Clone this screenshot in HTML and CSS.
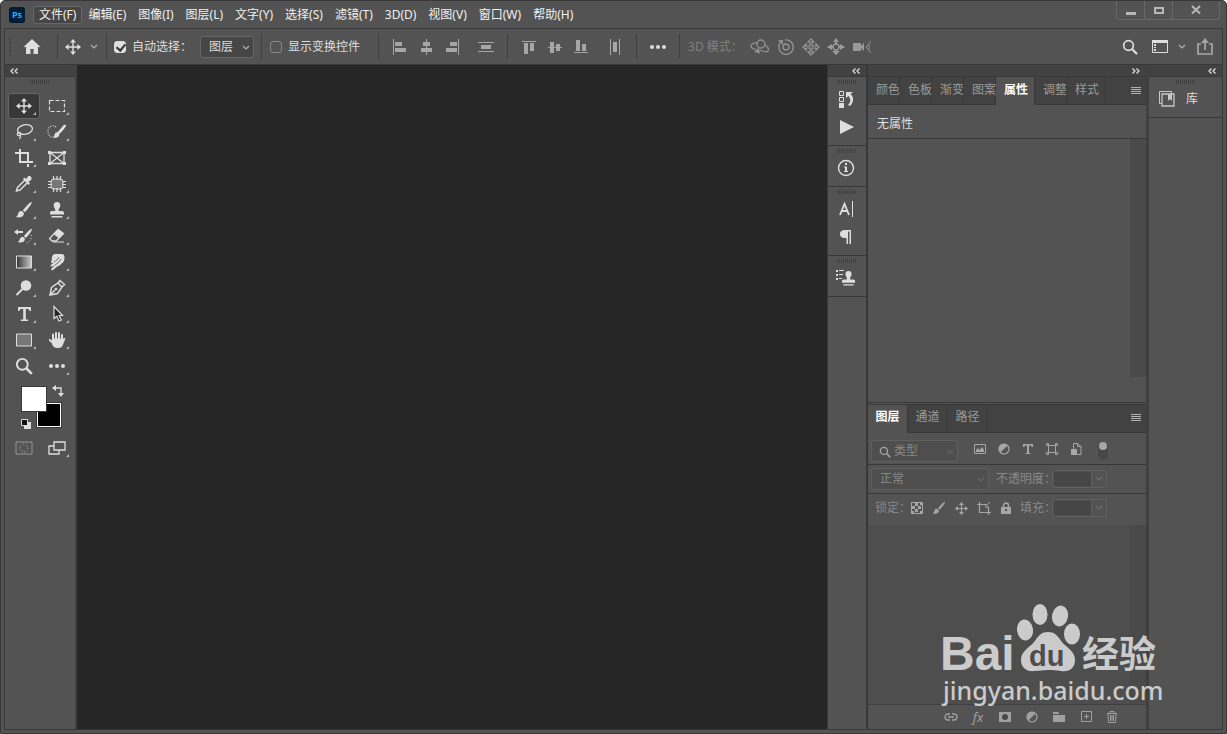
FILE: index.html
```html
<!DOCTYPE html>
<html lang="zh-CN">
  <head>
    <meta charset="UTF-8" />
    <meta name="viewport" content="width=device-width, initial-scale=1.0" />
    <title>Photoshop</title>
    <link rel="stylesheet" href="styles.css">
  </head>
  <body>
    <!-- Shared shapes -->
    <svg class="sprite" width="0" height="0" aria-hidden="true">
      <symbol id="move" viewBox="0 0 16 16"><path d="M8 2v12M2 8h12" stroke="currentColor" stroke-width="1.4"/><path d="M8 0l3 3.6H5zM8 16l3-3.6H5zM0 8l3.6-3v6zM16 8l-3.6-3v6z" fill="currentColor"/></symbol>
      <symbol id="chevron" viewBox="0 0 8 6"><path d="M1 1l3 3 3-3" fill="none" stroke="currentColor" stroke-width="1.2"/></symbol>
      <symbol id="collapse" viewBox="0 0 8 6"><path d="M3.5.5L1 3l2.500 2.500M7.500.5L5 3l2.500 2.500" fill="none" stroke="currentColor" stroke-width="1.300"/></symbol>
      <symbol id="menu" viewBox="0 0 10 8"><path d="M0 .5h10M0 2.500h10M0 4.500h10M0 6.500h10" stroke="currentColor"/></symbol>
      <symbol id="brush" viewBox="0 0 18 18"><path d="M16.500 1c-1-.5-5.500 4.300-8.700 8.300l2 1.900C13.500 7.500 17.600 2 16.500 1z" fill="currentColor"/><path d="M7 10.200c-1.800-.6-3.200.3-3.700 2-.4 1.700-1.200 2.900-2.300 3.800 2.800.8 7 .6 7.800-2.700.3-1.300-.4-2.500-1.800-3.100z" fill="currentColor"/></symbol>
      <symbol id="stamp" viewBox="0 0 16 18"><path d="M8 1a3.400 3.400 0 0 0-3.300 3.500C4.700 6.800 6.500 7 6.300 10H3c-1.200 0-2 .8-2 2v1.500h14V12c0-1.200-.8-2-2-2H9.700c-.2-3 1.600-3.200 1.600-5.500A3.400 3.400 0 0 0 8 1zM2.500 15h11v1.500h-11z" fill="currentColor"/></symbol>
      <symbol id="half" viewBox="0 0 12 12"><circle cx="6" cy="6" r="5" fill="none" stroke="currentColor" stroke-width="1.200"/><path d="M9.600 2.400A5.100 5.100 0 1 1 2.400 9.600z" fill="currentColor" transform="rotate(180 6 6)"/></symbol>
      <symbol id="search" viewBox="0 0 16 16"><circle cx="6.500" cy="6.500" r="4.800" fill="none" stroke="currentColor" stroke-width="1.700"/><path d="M10 10l5 5" stroke="currentColor" stroke-width="2.200"/></symbol>
    </svg>

    <div class="app">
      <header class="titlebar">
        <span class="ps-logo">Ps</span>
        <nav class="menubar">
          <button class="open">文件(F)</button>
          <button>编辑(E)</button>
          <button>图像(I)</button>
          <button>图层(L)</button>
          <button>文字(Y)</button>
          <button>选择(S)</button>
          <button>滤镜(T)</button>
          <button>3D(D)</button>
          <button>视图(V)</button>
          <button>窗口(W)</button>
          <button>帮助(H)</button>
        </nav>
        <div class="window-controls">
          <button aria-label="最小化"><svg width="12" height="12"><path d="M1 8h10v3H1z" fill="#b8b8b8"/></svg></button>
          <button aria-label="最大化"><svg width="12" height="12"><path d="M2 4h8v5H2z" fill="none" stroke="#b8b8b8" stroke-width="2"/></svg></button>
          <button class="close" aria-label="关闭"><svg width="12" height="12"><path d="M2 2l8 7.500M10 2L2 9.500" stroke="#b8b8b8" stroke-width="2"/></svg></button>
        </div>
      </header>

      <div class="workspace">
        <div class="options">
          <span class="options-grip"></span>
          <div class="option-group home">
            <button aria-label="主页"><svg width="18" height="18" viewBox="0 0 18 18"><path d="M9 1l8.500 8H15v7h-4.500v-5h-3v5H3V9H.5z" fill="#dedede"/></svg></button>
          </div>
          <div class="option-group current-tool">
            <button aria-label="移动工具"><svg width="16" height="16"><use href="#move"/></svg></button>
            <button class="more" aria-label="工具预设"><svg width="8" height="6"><use href="#chevron"/></svg></button>
          </div>
          <div class="option-group auto-select">
            <label class="check"><input type="checkbox" checked />自动选择：</label>
            <div class="dropdown target">
              <select aria-label="自动选择目标"><option>图层</option><option>组</option></select>
              <svg width="8" height="6"><use href="#chevron"/></svg>
            </div>
          </div>
          <div class="option-group transform">
            <label class="check"><input type="checkbox" />显示变换控件</label>
          </div>
          <div class="option-group align">
            <button aria-label="左对齐"><svg width="16" height="16"><path d="M1 0h1v16H1zM3 3h7v4H3zM3 9h11v4H3z"/></svg></button>
            <button aria-label="水平居中对齐"><svg width="16" height="16"><path d="M8 0h1v16H8zM5 3h7v4H5zM3 9h11v4H3z"/></svg></button>
            <button aria-label="右对齐"><svg width="16" height="16"><path d="M14 0h1v16h-1zM6 3h7v4H6zM2 9h11v4H2z"/></svg></button>
            <button class="spaced" aria-label="垂直分布"><svg width="16" height="16"><path d="M0 3h16v1H0zM3 6h10v4H3zM0 12h16v1H0z"/></svg></button>
          </div>
          <div class="option-group align">
            <button aria-label="顶对齐"><svg width="16" height="16"><path d="M1 2h14v1H1zM3 4h4v11H3zM9 4h4v8H9z"/></svg></button>
            <button aria-label="垂直居中对齐"><svg width="16" height="16"><path d="M1 8h14v1H1zM3 3h4v11H3zM9 5h4v7H9z"/></svg></button>
            <button aria-label="底对齐"><svg width="16" height="16"><path d="M1 13h14v1H1zM3 1h4v11H3zM9 5h4v7H9z"/></svg></button>
            <button class="spaced" aria-label="水平分布"><svg width="16" height="16"><path d="M3 0h1v16H3zM6 3h4v10H6zM12 0h1v16h-1z"/></svg></button>
          </div>
          <div class="option-group more-align">
            <button aria-label="更多"><svg width="18" height="6"><g fill="#dedede"><circle cx="3" cy="3" r="2"/><circle cx="9" cy="3" r="2"/><circle cx="15" cy="3" r="2"/></g></svg></button>
          </div>
          <div class="option-group mode-3d">
            <span>3D 模式：</span>
            <button aria-label="环绕"><svg width="20" height="18" viewBox="0 0 20 18"><g fill="none" stroke="#919191" stroke-width="1.300"><circle cx="11" cy="6" r="4"/><path d="M8 5c-4-.5-7 1-7 3 0 1.500 2 3 5 3.500M15 7c2.500 1.500 4 4 3 6-1.500 2-5 .5-8-1"/></g><path d="M4 14l5-4.500 1 6z" fill="#919191"/></svg></button>
            <button aria-label="滚动"><svg width="18" height="18"><g fill="none" stroke="#919191" stroke-width="1.400"><circle cx="9" cy="9" r="3"/><path d="M4 4a7.200 7.200 0 1 0 4-2"/></g><path d="M1 2h5v5z" fill="#919191"/></svg></button>
            <button aria-label="平移"><svg width="18" height="18"><path d="M9 1l3 3h-2v4h4V6l3 3-3 3v-2h-4v4h2l-3 3-3-3h2v-4H4v2L1 9l3-3v2h4V4H6z" fill="none" stroke="#999" stroke-width="1.200"/></svg></button>
            <button aria-label="滑动"><svg width="18" height="18"><path d="M9 1.500v15M1 9h16" stroke="#999" stroke-width="2"/><path d="M9 0l3 4H6zM5 13h8l-4 4zM0 9l5-3v6zM18 9l-5-3v6z" fill="#999"/><circle cx="9" cy="9" r="3" fill="#535353" stroke="#999" stroke-width="1.300"/></svg></button>
            <button aria-label="缩放相机"><svg width="20" height="14" viewBox="0 0 20 14"><path d="M1 3h8v8H1zM9 6l3-3v8L9 8z" fill="#999"/><path d="M19 1l-5 6 5 6M17 4v6" fill="none" stroke="#919191"/></svg></button>
          </div>
          <div class="options-right">
            <button class="find" aria-label="搜索"><svg width="16" height="16"><use href="#search"/></svg></button>
            <button aria-label="工作区"><svg width="16" height="14"><path d="M.5.5h15v12H.5z" fill="none" stroke="#dedede"/><path d="M0 0h16v3H0zM2 4h2v2H2zM2 7h2v1H2zM2 9h2v2H2z" fill="#dedede"/></svg></button>
            <button class="more" aria-label="工作区选项"><svg width="8" height="6"><use href="#chevron"/></svg></button>
            <button aria-label="共享"><svg width="18" height="18"><path d="M5 6H2v10h14V6h-3M9 12V3" fill="none" stroke="#a6a6a6" stroke-width="1.700"/><path d="M9 0l4 5H5z" fill="#a6a6a6"/></svg></button>
          </div>
        </div>

        <main class="main">
          <aside class="toolbar">
            <div class="strip"><button aria-label="折叠"><svg width="8" height="6"><use href="#collapse"/></svg></button></div>
            <div class="grip"></div>
            <div class="tools">
              <button class="tool selected" aria-label="移动"><svg width="16" height="16"><use href="#move"/></svg></button>
              <button class="tool" aria-label="矩形选框"><svg width="18" height="16"><path d="M1.500 2.500h15v11h-15z" fill="none" stroke="#dedede" stroke-width="1.200" stroke-dasharray="4 2"/></svg></button>
              <button class="tool" aria-label="套索"><svg width="18" height="18"><g fill="none" stroke="#dedede" stroke-width="1.300"><ellipse cx="10" cy="6.500" rx="7.500" ry="4.800" transform="rotate(-12 10 6.500)"/><circle cx="4" cy="11" r="1.700"/><path d="M5 12c1.500 1.500 0 3-.5 4"/></g></svg></button>
              <button class="tool" aria-label="快速选择"><svg width="20" height="18" viewBox="0 0 20 18"><path d="M9 4C5 1 1 4 1 8s3 8 8 6" fill="none" stroke="#dedede" stroke-width="1.200" stroke-dasharray="1 1.500"/><use href="#brush" x="5" y="1" width="15" height="15"/><path d="M17.500 3l-6 7" stroke="#dedede" stroke-width="2.500" stroke-linecap="round"/></svg></button>
              <button class="tool" aria-label="裁剪"><svg width="18" height="18"><path d="M0 4h13v10M5 0v13h13" fill="none" stroke="#dedede" stroke-width="2"/><path d="M12 15h2v3h-2z" fill="#dedede"/></svg></button>
              <button class="tool single" aria-label="图框"><svg width="18" height="16"><path d="M2 2.500h14v11H2zM2 2.500l14 11M16 2.500l-14 11" fill="none" stroke="#dedede" stroke-width="1.300"/><path d="M0 1h3v3H0zM15 1h3v3h-3zM0 12h3v3H0zM15 12h3v3h-3z" fill="#dedede"/></svg></button>
              <button class="tool" aria-label="吸管"><svg width="18" height="18"><path d="M10 5L2.500 12.500 1.500 16l3.500-1L12.500 7.500" fill="none" stroke="#dedede" stroke-width="1.500"/><path d="M8 4l1.500-1.500L11 4l2-2.500c1.500-1.500 5 1 3 3.500L13.500 7l1.500 1.500L13.500 10z" fill="#dedede"/></svg></button>
              <button class="tool" aria-label="修补"><svg width="18" height="16"><rect x="3" y="3" width="12" height="10" rx="3" fill="#777" stroke="#dedede"/><path d="M5.500 0v4M9 0v4M12.500 0v4M5.500 12v4M9 12v4M12.500 12v4M0 5.500h4M0 8.500h4M0 11.500h4M14 5.500h4M14 8.500h4M14 11.500h4" stroke="#dedede" stroke-width="1.200"/></svg></button>
              <button class="tool" aria-label="画笔"><svg width="18" height="18"><use href="#brush"/></svg></button>
              <button class="tool" aria-label="仿制图章"><svg width="16" height="18"><use href="#stamp"/></svg></button>
              <button class="tool" aria-label="历史记录画笔"><svg width="20" height="18" viewBox="0 0 20 18"><use href="#brush" x="3" y="1" width="16" height="16"/><path d="M3 5h6" stroke="#dedede" stroke-width="2"/><path d="M0 5l4-3v6z" fill="#dedede"/><path d="M17 8c1 4-1 7-5 8" fill="none" stroke="#dedede" stroke-dasharray="1 2"/></svg></button>
              <button class="tool" aria-label="橡皮擦"><svg width="18" height="16"><path d="M10 1.500l5.500 4L8 13H4L1.500 10.500z" fill="none" stroke="#dedede" stroke-width="1.300"/><path d="M10 1l6 4.500-5 5L5.500 6z" fill="#dedede"/><path d="M5 14h11" stroke="#dedede"/></svg></button>
              <button class="tool" aria-label="渐变"><svg width="18" height="14"><defs><linearGradient id="fade"><stop offset="0" stop-color="#333"/><stop offset="1" stop-color="#ccc"/></linearGradient></defs><path d="M1.500 1h15v12h-15z" fill="url(#fade)" stroke="#dedede"/></svg></button>
              <button class="tool" aria-label="涂抹"><svg width="16" height="18"><path d="M3 4c0-2 2-3 4-3h6c2 0 2.500 2 2.500 4 0 3-1.500 5-3.500 6-1 1.500-2 2-3 2l-5 4c-1.500 1-2.500-.5-1.500-1.500L6 12l-3 1.500C1.500 14 1 12.500 2 11.700L5 9.500 3 10c-1.200.2-1.500-1.200-.5-1.700z" fill="#dedede"/><path d="M5 9l3-2 2-3M6 12l4-3 2-3" fill="none" stroke="#535353" stroke-width=".8"/></svg></button>
              <button class="tool" aria-label="减淡"><svg width="18" height="18"><circle cx="11" cy="6.500" r="5.300" fill="#dedede"/><path d="M7.500 10L1.500 16" stroke="#dedede" stroke-width="2"/></svg></button>
              <button class="tool" aria-label="钢笔"><svg width="18" height="18"><path d="M2 16L3.500 8.500 10 4l4 4-4.500 6.500zM10 4l2-2.500 4.500 4L14 8M2 16l5-5" fill="none" stroke="#dedede" stroke-width="1.400"/><circle cx="8" cy="10" r="1.300" fill="#dedede"/></svg></button>
              <button class="tool" aria-label="文字"><svg width="16" height="16"><path d="M2 1h13v4h-1.500c-.2-1.500-.7-2-2-2h-1.700v10.500h2.400V15H4.800v-1.500h2.400V3H5.500c-1.300 0-1.800.5-2 2H2z" fill="#dedede"/></svg></button>
              <button class="tool" aria-label="路径选择"><svg width="16" height="18"><path d="M5 1.500v12l2.800-2.300L10 16l2.300-1-2.200-4.500h3.400z" fill="#222" stroke="#dedede" stroke-width="1.200"/></svg></button>
              <button class="tool" aria-label="矩形"><svg width="18" height="14"><path d="M1.500 1h15v12h-15z" fill="#777" stroke="#dedede"/></svg></button>
              <button class="tool" aria-label="抓手"><svg width="18" height="18"><path d="M5 9V3.500M8 8V2M11 8V2M14 9V4M6 13L1.800 9" stroke="#dedede" stroke-width="2" stroke-linecap="round"/><path d="M4 7.500h11.200L16.500 7l1 .5-2.500 6c-.7 2.500-2 3.500-5 3.500-3.500 0-4.500-1-6-3.500z" fill="#dedede"/></svg></button>
              <button class="tool single" aria-label="缩放"><svg width="18" height="18"><use href="#search"/></svg></button>
              <button class="tool" aria-label="编辑工具栏"><svg width="18" height="6"><g fill="#dedede"><circle cx="3" cy="3" r="2"/><circle cx="9" cy="3" r="2"/><circle cx="15" cy="3" r="2"/></g></svg></button>
            </div>
            <div class="swatches">
              <button class="background" aria-label="背景色"></button>
              <button class="foreground" aria-label="前景色"></button>
              <button class="swap" aria-label="切换颜色"><svg width="12" height="12"><path d="M3 3h6v6" fill="none" stroke="#dedede" stroke-width="1.300"/><path d="M0 3l4-3v6zM9 12l-3-4h6z" fill="#dedede"/></svg></button>
              <button class="reset" aria-label="默认颜色"><svg width="10" height="10"><path d="M3 3h7v7H3z" fill="#dedede"/><path d="M.5.5h6v6h-6z" fill="#111" stroke="#dedede"/></svg></button>
            </div>
            <div class="tools">
              <button class="tool single" aria-label="快速蒙版"><svg width="18" height="14"><path d="M1 1h16v12H1z" fill="none" stroke="#999"/><circle cx="9" cy="7" r="4" fill="none" stroke="#b8b8b8" stroke-dasharray="1 1.500"/></svg></button>
              <button class="tool" aria-label="屏幕模式"><svg width="18" height="14"><path d="M1 5h10v8H1z" fill="none" stroke="#dedede" stroke-width="1.300"/><path d="M6 1h11v8H6z" fill="#535353" stroke="#dedede" stroke-width="1.300"/></svg></button>
            </div>
          </aside>

          <section class="canvas"></section>

          <aside class="dock">
            <div class="strip right"><button aria-label="展开"><svg width="8" height="6"><use href="#collapse"/></svg></button></div>
            <div class="dock-group">
              <div class="grip"></div>
              <button aria-label="历史记录"><svg width="18" height="18"><path d="M2.500 1.500h4v4h-4zM2.500 7.500h4v4h-4z" fill="none" stroke="#dedede"/><path d="M2 13h5v5H2z" fill="#dedede"/><path d="M9 6V2h7l-2.500 2c3.500 3 3.500 8-.5 12l-2-1c3-3 3-6 .5-9L9 8z" fill="#dedede"/></svg></button>
              <button aria-label="动作"><svg width="18" height="18"><path d="M3 2l14 7-14 7z" fill="#dedede"/></svg></button>
            </div>
            <div class="dock-group">
              <div class="grip"></div>
              <button aria-label="信息"><svg width="18" height="18"><circle cx="9" cy="9" r="7.500" fill="none" stroke="#dedede" stroke-width="1.400"/><path d="M8 4h2v2H8zM7 7.500h3V12h1v1H7v-1h1V8.500H7z" fill="#dedede"/></svg></button>
            </div>
            <div class="dock-group">
              <div class="grip"></div>
              <button aria-label="字符"><svg width="18" height="18"><path d="M3 15L7.500 4 12 15M4.500 11h6" fill="none" stroke="#dedede" stroke-width="1.800"/><path d="M15.500 1v16" stroke="#dedede"/></svg></button>
              <button aria-label="段落"><svg width="18" height="18"><path d="M14 2v14h-1.500V3.500H11V16H9.500v-6C6 10.500 3 9 3 6s2.500-4 5-4z" fill="#dedede"/></svg></button>
            </div>
            <div class="dock-group">
              <div class="grip"></div>
              <button aria-label="仿制源"><svg width="20" height="18" viewBox="0 0 20 18"><path d="M0 1h2v2H0zM0 5h2v2H0zM0 9h2v2H0zM3 1h5v1H3zM3 5h4v1H3zM3 9h3v1H3z" fill="#dedede"/><use href="#stamp" x="5" y="1" width="15" height="17"/></svg></button>
            </div>
          </aside>

          <aside class="panels">
            <div class="strip right"><button aria-label="折叠面板"><svg class="flip" width="8" height="6"><use href="#collapse"/></svg></button></div>

            <section class="panel properties">
              <div class="tabs compact">
                <button>颜色</button>
                <button>色板</button>
                <button>渐变</button>
                <button>图案</button>
                <button class="active">属性</button>
                <button>调整</button>
                <button class="last">样式</button>
                <button class="panel-menu" aria-label="面板菜单"><svg width="10" height="8"><use href="#menu"/></svg></button>
              </div>
              <div class="panel-title">无属性</div>
              <div class="panel-body"><div class="scrollbar"></div></div>
            </section>

            <section class="panel layers">
              <div class="tabs">
                <button class="active">图层</button>
                <button>通道</button>
                <button>路径</button>
                <button class="panel-menu" aria-label="面板菜单"><svg width="10" height="8"><use href="#menu"/></svg></button>
              </div>
              <div class="row filter">
                <div class="dropdown kind">
                  <svg class="lens" width="12" height="12"><use href="#search"/></svg>
                  <select aria-label="筛选类型"><option>类型</option><option>名称</option></select>
                  <svg width="8" height="6"><use href="#chevron"/></svg>
                </div>
                <div class="filter-icons">
                  <button aria-label="像素图层"><svg width="12" height="12"><path d="M.5 1.500h11v9H.5z" fill="none" stroke="#a6a6a6"/><path d="M2 9V7l2-2 1.500 2L8 4l2 3v2z" fill="#a6a6a6"/></svg></button>
                  <button aria-label="调整图层"><svg width="12" height="12"><use href="#half"/></svg></button>
                  <button aria-label="文字图层"><svg width="12" height="12" viewBox="0 0 12 12"><path d="M1 1h10v3H9.500L9 2.500H7V10h1.500v1h-5v-1H5V2.500H3L2.500 4H1z" fill="#a6a6a6"/></svg></button>
                  <button aria-label="形状图层"><svg width="12" height="12"><path d="M2.500 2.500h7v7h-7z" fill="none" stroke="#a6a6a6"/><path d="M.5.5h2v2h-2zM9.500.5h2v2h-2zM.5 9.500h2v2h-2zM9.500 9.500h2v2h-2z" fill="#535353" stroke="#a6a6a6"/></svg></button>
                  <button aria-label="智能对象"><svg width="12" height="12"><path d="M3.500 6V.5h4l3.500 3v8H7M7.500.5v3H11" fill="none" stroke="#a6a6a6"/><path d="M1 6h6v6H1z" fill="#a6a6a6"/></svg></button>
                </div>
                <button class="toggle" aria-label="打开图层过滤"></button>
              </div>
              <div class="row blend">
                <div class="dropdown mode">
                  <select aria-label="混合模式"><option>正常</option><option>溶解</option></select>
                  <svg width="8" height="6"><use href="#chevron"/></svg>
                </div>
                <label for="opacity">不透明度：</label>
                <div class="number"><input id="opacity" type="text" /><button aria-label="不透明度滑块"><svg width="8" height="6"><use href="#chevron"/></svg></button></div>
              </div>
              <div class="row lock">
                <span class="lock-label">锁定：</span>
                <div class="lock-icons">
                  <button aria-label="锁定透明像素"><svg width="12" height="12"><path d="M.5.5h11v11H.5z" fill="none" stroke="#a6a6a6"/><path d="M4 1h3v3H4zM1 4h3v3H1zM7 4h3v3H7zM4 7h3v3H4zM9 1h2v2H9zM9 9h2v2H9zM1 9h2v2H1z" fill="#a6a6a6"/></svg></button>
                  <button aria-label="锁定图像像素"><svg width="14" height="14"><use href="#brush"/></svg></button>
                  <button aria-label="锁定位置"><svg width="13" height="13"><use href="#move"/></svg></button>
                  <button aria-label="锁定画板"><svg width="14" height="14"><path d="M0 3.500h9M11.500 6v8M2.500 1v10.500H14M9 3v3h3" fill="none" stroke="#a6a6a6" stroke-width="1.200"/><path d="M10 4l3-3" stroke="#a6a6a6"/></svg></button>
                  <button aria-label="锁定全部"><svg width="12" height="12"><path d="M3.500 5V3.500a2.500 2.500 0 0 1 5 0V5" fill="none" stroke="#a6a6a6" stroke-width="1.500"/><path d="M1 5h10v7H1z" fill="#a6a6a6"/><path d="M5 7h2v2H5z" fill="#535353"/></svg></button>
                </div>
                <label for="fill">填充：</label>
                <div class="number"><input id="fill" type="text" /><button aria-label="填充滑块"><svg width="8" height="6"><use href="#chevron"/></svg></button></div>
              </div>
              <div class="layer-list"><div class="scrollbar"></div></div>
              <footer class="layer-actions">
                <button aria-label="链接图层"><svg width="14" height="14"><path d="M6 4H4a3 3 0 0 0 0 6h2M8 4h2a3 3 0 0 1 0 6H8M4 7h6" fill="none" stroke="#a0a0a0" stroke-width="1.300"/></svg></button>
                <button class="fx" aria-label="图层样式">fx</button>
                <button aria-label="添加蒙版"><svg width="14" height="14"><path d="M1 2h12v10H1z" fill="#a0a0a0"/><circle cx="7" cy="7" r="3" fill="#484848"/></svg></button>
                <button aria-label="新建调整图层"><svg width="14" height="12"><use href="#half"/></svg></button>
                <button aria-label="新建组"><svg width="14" height="14"><path d="M1 2h5l1 1v1H1zM1 5h12v7H1z" fill="#a0a0a0"/></svg></button>
                <button aria-label="新建图层"><svg width="14" height="14"><path d="M2.500 1.500h10v10h-10zM7.500 4v5M5 6.500h5" fill="none" stroke="#a0a0a0"/></svg></button>
                <button aria-label="删除图层"><svg width="12" height="14"><path d="M1 3.500h10M4 3V1.500h4V3M2 4l.5 8.500h7L10 4M4.500 5v6M6 5v6M7.500 5v6" fill="none" stroke="#a0a0a0"/></svg></button>
              </footer>
            </section>
          </aside>

          <aside class="library">
            <div class="strip right"><button aria-label="折叠"><svg width="8" height="6"><use href="#collapse"/></svg></button></div>
            <div class="library-head">
              <div class="grip"></div>
              <button><svg width="18" height="18"><path d="M3.500 13.500h-2v-12h12v2" fill="none" stroke="#c8c8c8"/><path d="M4 4h12v12H4z" fill="none" stroke="#c8c8c8" stroke-width="1.300"/><path d="M10 4h4v7l-2-2-2 2z" fill="#c8c8c8"/></svg>库</button>
            </div>
          </aside>
        </main>
      </div>

      <div class="watermark">
        <svg width="230" height="112" viewBox="0 0 230 112">
          <g fill="#cbcbcb">
            <ellipse cx="85" cy="30" rx="8" ry="10.500" transform="rotate(-8 85 30)"/>
            <ellipse cx="100" cy="14.500" rx="7.500" ry="10.500"/>
            <ellipse cx="120" cy="16" rx="8" ry="10.500" transform="rotate(12 120 16)"/>
            <ellipse cx="132" cy="34" rx="8" ry="10.500"/>
            <path d="M108 32c8 0 10 5 14 10 5 6 13 9 13 18 0 10-8 12-14 11-5-1-8-1-13-1s-8 1-13 1c-8 1-14-3-14-11 0-9 8-12 13-18 4-5 6-10 14-10z"/>
            <text class="brand" x="0" y="70">Bai</text>
            <text class="brand-cn" x="142" y="68">经验</text>
            <text class="address" x="3" y="100">jingyan.baidu.com</text>
          </g>
          <text class="paw-text" x="89" y="66">du</text>
        </svg>
      </div>
    </div>
  </body>
</html>
```

FILE: styles.css
```css
* {
  box-sizing: border-box;
}

body {
  margin: 0;
  font-family: "Noto Sans", "Noto Sans CJK SC", sans-serif;
  font-size: 12px;
  line-height: 16px;
  color: #dedede;
  background-color: #fff;
}

button {
  display: flex;
  align-items: center;
  justify-content: center;
  margin: 0;
  padding: 0;
  border: none;
  background: none;
  color: inherit;
  font: inherit;
  white-space: nowrap;
}

svg {
  display: block;
  flex: none;
}

.sprite {
  position: absolute;
}

.app {
  position: relative;
  display: flex;
  flex-direction: column;
  height: 100vh;
  border: 1px solid #383838;
  border-radius: 5px 5px 0 0;
  background-color: #535353;
  overflow: hidden;
}

/* Title bar */
.titlebar {
  display: flex;
  align-items: center;
  height: 27px;
  flex: none;
  padding: 0 6px 0 8px;
}

.ps-logo {
  width: 16px;
  height: 16px;
  margin-right: 8px;
  border-radius: 3px;
  background-color: #001e36;
  color: #31a8ff;
  font-size: 9px;
  font-weight: bold;
  text-align: center;
}

.menubar {
  display: flex;
  color: #f0f0f0;
}

.menubar button {
  height: 18px;
  padding: 0 5px;
  border: 1px solid transparent;
  border-radius: 3px;
}

.menubar .open {
  border-color: #686868;
  background-color: #464646;
}

.window-controls {
  display: flex;
  align-self: flex-start;
  margin-left: auto;
  border: 1px solid #686868;
  border-top: none;
  border-radius: 0 0 4px 4px;
}

.window-controls button {
  width: 28px;
  height: 18px;
  border-right: 1px solid #686868;
}

.window-controls .close {
  width: 46px;
  border-right: none;
}

.workspace {
  display: flex;
  flex-direction: column;
  flex: 1;
  min-height: 0;
  margin: 0 3px 3px;
  border: 1px solid #383838;
}

/* Options bar */
.options {
  display: flex;
  align-items: center;
  flex: none;
  height: 36px;
  border-bottom: 1px solid #383838;
}

.options-grip {
  width: 2px;
  height: 20px;
  margin-left: 4px;
  background: repeating-linear-gradient(#404040 0 1px, transparent 1px 2px);
}

.option-group {
  display: flex;
  align-items: center;
  height: 25px;
  border-right: 1px solid #404040;
}

.home {
  padding: 0 16px 0 12px;
}

.current-tool {
  gap: 9px;
  padding: 0 8px 0 7px;
}

.more {
  color: #b0b0b0;
}

.check {
  display: flex;
  align-items: center;
  gap: 6px;
  white-space: nowrap;
}

.check input {
  appearance: none;
  width: 12px;
  height: 12px;
  margin: 0;
  border: 1px solid #888;
  border-radius: 3px;
}

.check input:checked {
  border-color: #dedede;
  background-color: #dedede;
}

.check input:checked::after {
  content: "";
  display: block;
  width: 4px;
  height: 7px;
  margin-left: 3px;
  border: solid #333;
  border-width: 0 2px 2px 0;
  transform: rotate(40deg);
}

.auto-select {
  gap: 8px;
  padding: 0 7px;
}

.transform {
  padding: 0 18px 0 8px;
}

.dropdown {
  position: relative;
  flex: none;
  height: 22px;
}

.dropdown select {
  appearance: none;
  width: 100%;
  height: 100%;
  padding: 0 8px;
  border: 1px solid #666;
  border-radius: 3px;
  background-color: #464646;
  color: inherit;
  font: inherit;
}

.dropdown svg {
  position: absolute;
  top: 9px;
  right: 4px;
  color: #b0b0b0;
  pointer-events: none;
}

.target {
  width: 54px;
}

.align {
  gap: 10px;
  padding: 0 13px;
  fill: #a6a6a6;
}

.align .spaced {
  margin-left: 8px;
}

.more-align {
  padding: 0 12px;
}

.mode-3d {
  gap: 7px;
  padding-left: 8px;
  border: none;
  color: #808080;
  white-space: nowrap;
}

.options-right {
  display: flex;
  align-items: center;
  gap: 10px;
  margin-left: auto;
  padding-right: 8px;
}

.find {
  margin-right: 4px;
}

/* Shared panel pieces */
.main {
  display: flex;
  flex: 1;
  min-height: 0;
}

.strip {
  display: flex;
  align-items: center;
  flex: none;
  height: 12px;
  padding: 0 5px;
  border-bottom: 1px solid #383838;
  background-color: #424242;
}

.strip.right {
  justify-content: flex-end;
  padding: 0 6px;
}

.flip {
  transform: scaleX(-1);
}

.grip {
  width: 20px;
  height: 4px;
  margin: 3px auto 0;
  background: repeating-linear-gradient(90deg, #404040 0 1px, transparent 1px 2px);
}

/* Toolbar */
.toolbar {
  flex: none;
  width: 72px;
  border-right: 2px solid #404040;
}

.toolbar .grip {
  margin-bottom: 9px;
}

.tools {
  display: grid;
  grid-template-columns: 32px 32px;
  grid-auto-rows: 26px;
  column-gap: 1px;
  padding-left: 3px;
}

.tool {
  position: relative;
  border: 1px solid transparent;
  border-radius: 3px;
}

.tool.selected {
  border-color: #666;
  background-color: #383838;
}

.tool::after {
  content: "";
  position: absolute;
  right: 3px;
  bottom: 3px;
  border: solid transparent;
  border-width: 0 0 3px 3px;
  border-bottom-color: #b8b8b8;
}

.tool.single::after {
  display: none;
}

.swatches {
  position: relative;
  height: 56px;
}

.swatches button {
  position: absolute;
}

.foreground {
  top: 7px;
  left: 16px;
  width: 26px;
  height: 26px;
  border: 1px solid #383838;
  background-color: #fff;
}

.background {
  top: 24px;
  left: 32px;
  width: 24px;
  height: 24px;
  border: 1px solid #fff;
  outline: 1px solid #383838;
  background-color: #000;
}

.swap {
  top: 6px;
  left: 47px;
}

.reset {
  top: 40px;
  left: 16px;
}

.canvas {
  flex: 1;
  min-width: 0;
  background-color: #262626;
}

/* Icon dock */
.dock {
  flex: none;
  width: 41px;
  border: solid #383838;
  border-width: 0 2px 0 1px;
}

.dock-group {
  padding-bottom: 4px;
  border-bottom: 1px solid #383838;
}

.dock-group .grip {
  margin-bottom: 1px;
}

.dock-group button {
  width: 100%;
  height: 28px;
  padding-right: 2px;
}

/* Panels */
.panels {
  display: flex;
  flex-direction: column;
  flex: none;
  width: 281px;
  border-right: 3px solid #404040;
}

.panel {
  display: flex;
  flex-direction: column;
  flex: 1;
  min-height: 0;
}

.properties {
  border-bottom: 1px solid #383838;
}

.layers {
  margin-top: 1px;
  border-top: 1px solid #383838;
}

.tabs {
  display: flex;
  flex: none;
  height: 28px;
  background-color: #424242;
  color: #9a9a9a;
}

.tabs button {
  width: 40px;
  padding-bottom: 2px;
  border-right: 1px solid #383838;
  border-bottom: 1px solid #383838;
}

.tabs .active {
  border-bottom-color: #535353;
  background-color: #535353;
  color: #fff;
  font-weight: bold;
}

.compact button {
  justify-content: flex-start;
  width: 32px;
  padding-left: 8px;
}

.compact .active,
.compact .last {
  width: 39px;
}

.tabs .panel-menu {
  flex: 1;
  justify-content: flex-end;
  padding: 0 5px 0 0;
  border-right: none;
  color: #b0b0b0;
}

.panel-title {
  flex: none;
  height: 34px;
  padding: 11px 9px;
  border-bottom: 1px solid #383838;
}

.panel-body {
  flex: 1;
  padding-bottom: 25px;
}

.scrollbar {
  width: 16px;
  height: 100%;
  margin-left: auto;
  background-color: #4a4a4a;
}

.row {
  display: flex;
  align-items: center;
  flex: none;
  height: 29px;
  padding: 0 3px;
  border-bottom: 1px solid #383838;
  color: #888;
}

.row select {
  border-color: #606060;
  background-color: #4e4e4e;
}

.row .dropdown > svg {
  color: #666;
}

.filter {
  height: 32px;
  padding-top: 5px;
}

.kind {
  width: 87px;
}

.kind select {
  padding-left: 22px;
}

.row .kind .lens {
  top: 6px;
  left: 8px;
  color: #a6a6a6;
}

.filter-icons {
  display: flex;
  gap: 12px;
  margin: 0 16px;
  padding-bottom: 3px;
  color: #a6a6a6;
}

.toggle {
  align-items: flex-start;
  width: 10px;
  height: 18px;
  border-radius: 5px;
  background-color: #484848;
}

.toggle::before {
  content: "";
  width: 8px;
  height: 8px;
  border-radius: 50%;
  background-color: #a6a6a6;
}

.mode {
  width: 118px;
  margin-right: 7px;
}

.row label {
  min-width: 0;
  white-space: nowrap;
}

.number {
  display: flex;
  flex: none;
  width: 55px;
  height: 18px;
  margin-left: auto;
  margin-right: 36px;
  border: 1px solid #606060;
  border-radius: 3px;
}

.number input {
  width: 39px;
  min-width: 0;
  padding: 0 3px;
  border: 1px solid #505050;
  border-right-color: #606060;
  background-color: #464646;
  color: inherit;
  font: inherit;
}

.number button {
  flex: 1;
  color: #6c6c6c;
}

.lock {
  height: 31px;
  padding-bottom: 2px;
  border-bottom: none;
}

.lock-label {
  flex: none;
  width: 36px;
  margin-left: 4px;
  white-space: nowrap;
}

.lock-icons {
  display: flex;
  flex: none;
  gap: 9px;
  margin-right: 8px;
  color: #a6a6a6;
}

.layer-list {
  flex: 1;
  background-color: #4e4e4e;
}

.layer-actions {
  display: flex;
  align-items: center;
  justify-content: flex-end;
  flex: none;
  gap: 13px;
  height: 25px;
  padding-right: 28px;
  border-top: 1px solid #404040;
  color: #a0a0a0;
}

.fx {
  width: 14px;
  font-size: 13px;
  font-style: italic;
}

/* Library */
.library {
  flex: none;
  width: 73px;
}

.library-head {
  display: flow-root;
  height: 41px;
  border-bottom: 1px solid #383838;
}

.library-head button {
  gap: 10px;
  margin: 6px 0 0 9px;
}

/* Watermark */
.watermark {
  position: absolute;
  right: 56px;
  bottom: 21px;
  pointer-events: none;
}

.brand {
  font: bold 48px "Liberation Sans", sans-serif;
}

.brand-cn {
  font: bold 37px "Noto Sans CJK SC", sans-serif;
}

.paw-text {
  fill: #4e4e4e;
  font: bold 29px "Liberation Sans", sans-serif;
}

.address {
  font: 500 25px "Noto Sans", sans-serif;
}
```
